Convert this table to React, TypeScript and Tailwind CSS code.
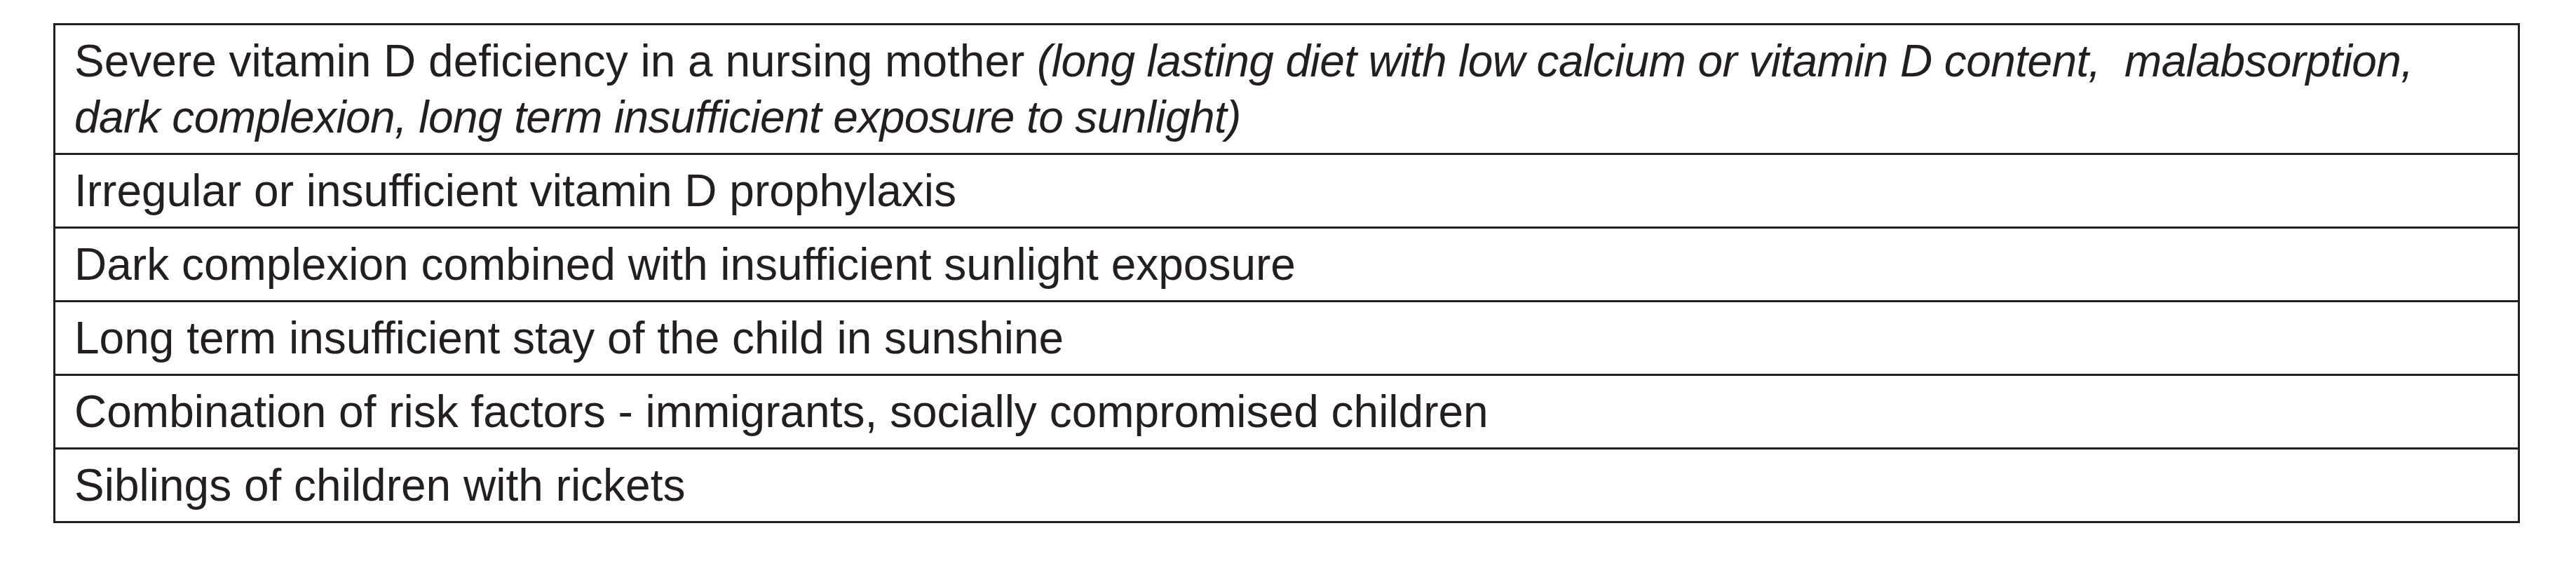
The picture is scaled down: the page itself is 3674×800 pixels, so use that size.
const rows: { text: string; note?: string[] }[] = [
  {
    text: "Severe vitamin D deficiency in a nursing mother ",
    note: [
      "(long lasting diet with low calcium or vitamin D content,\u00a0 malabsorption,",
      "dark complexion, long term insufficient exposure to sunlight)",
    ],
  },
  { text: "Irregular or insufficient vitamin D prophylaxis" },
  { text: "Dark complexion combined with insufficient sunlight exposure" },
  { text: "Long term insufficient stay of the child in sunshine" },
  { text: "Combination of risk factors - immigrants, socially compromised children" },
  { text: "Siblings of children with rickets" },
]

export default function App() {
  return (
    <div className="min-h-[800px] w-[3674px] bg-white pl-[76px] pt-[33px] font-['Liberation_Sans',Arial,sans-serif] text-[#231f20]">
      <div className="w-[3518px] border-[3px] border-[#231f20] divide-y-[3px] divide-[#231f20]">
        {rows.map((row, i) => (
          <div key={i} className="px-[27px] py-[11px] text-[64px] leading-[80px]">
            {row.text}
            {row.note && (
              <em className="italic tracking-[-0.6px]">
                {row.note[0]}
                <br />
                {row.note[1]}
              </em>
            )}
          </div>
        ))}
      </div>
    </div>
  )
}
